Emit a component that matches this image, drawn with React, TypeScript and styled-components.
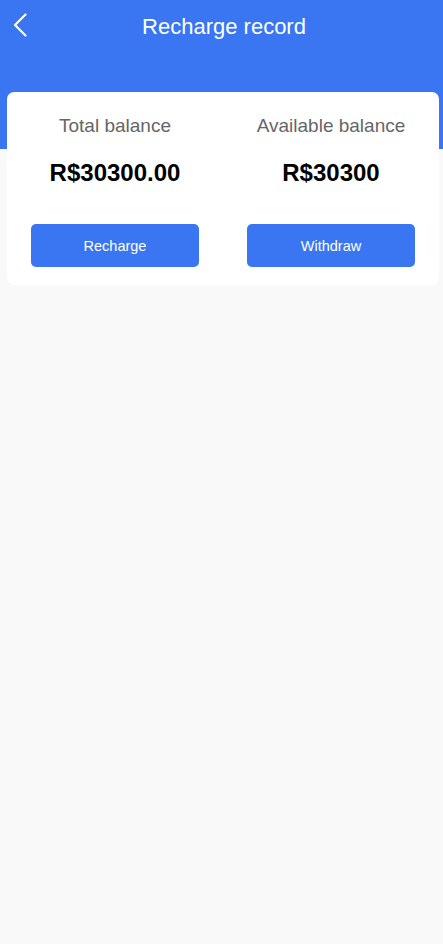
import React from "react";
import styled, { createGlobalStyle } from "styled-components";

const GlobalStyle = createGlobalStyle`
  html, body { margin: 0; padding: 0; background: #f9f9f9; }
  body { font-family: "Liberation Sans", Arial, Helvetica, sans-serif; }
  * { box-sizing: border-box; }
`;

const Page = styled.div`
  min-height: 944px;
  background: #f9f9f9;
`;

const Header = styled.header`
  height: 149px;
  background: #3a76f2;
`;

const NavBar = styled.div`
  position: relative;
  height: 52px;
  display: flex;
  align-items: center;
  justify-content: center;
`;

const BackButton = styled.button`
  position: absolute;
  left: 8px;
  top: 9px;
  width: 24px;
  height: 32px;
  padding: 0;
  border: none;
  background: transparent;
  display: flex;
  align-items: center;
  justify-content: center;
  cursor: pointer;
`;

const Title = styled.h1`
  margin: 0;
  margin-top: 1px;
  margin-left: 5px;
  font-size: 22px;
  font-weight: normal;
  color: #ffffff;
`;

const CardWrap = styled.div`
  padding: 0 4px 0 7px;
  margin-top: -57px;
`;

const Card = styled.section`
  background: #ffffff;
  border-radius: 7px;
  display: grid;
  grid-template-columns: 1fr 1fr;
  padding-bottom: 18px;
`;

const Column = styled.div`
  display: flex;
  flex-direction: column;
  align-items: center;
  padding: 0 24px;
`;

const Label = styled.div`
  margin-top: 23px;
  font-size: 19px;
  line-height: 22px;
  color: #666666;
`;

const Amount = styled.div`
  margin-top: 22px;
  font-size: 24px;
  line-height: 28px;
  font-weight: bold;
  color: #000000;
`;

const ActionButton = styled.button`
  margin-top: 37px;
  width: 100%;
  height: 43px;
  border: none;
  border-radius: 5px;
  background: #3a76f2;
  color: #ffffff;
  font-family: inherit;
  font-size: 14.5px;
  cursor: pointer;
`;

const Chevron = () => (
  <svg width="14" height="24" viewBox="0 0 14 24" fill="none">
    <path d="M12.5 1.5 L2 12 L12.5 22.5" stroke="#fff" strokeWidth="2.2" strokeLinecap="round" strokeLinejoin="round" />
  </svg>
);

const items = [
  { label: "Total balance", amount: "R$30300.00", action: "Recharge" },
  { label: "Available balance", amount: "R$30300", action: "Withdraw" },
];

export default function App() {
  return (
    <Page>
      <GlobalStyle />
      <Header>
        <NavBar>
          <BackButton aria-label="Back">
            <Chevron />
          </BackButton>
          <Title>Recharge record</Title>
        </NavBar>
      </Header>
      <CardWrap>
        <Card>
          {items.map((it) => (
            <Column key={it.label}>
              <Label>{it.label}</Label>
              <Amount>{it.amount}</Amount>
              <ActionButton>{it.action}</ActionButton>
            </Column>
          ))}
        </Card>
      </CardWrap>
    </Page>
  );
}
